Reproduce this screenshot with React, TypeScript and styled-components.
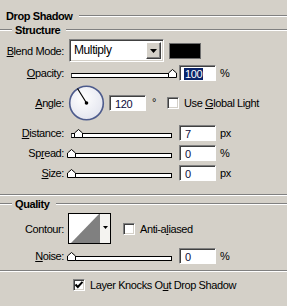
import styled, { createGlobalStyle } from "styled-components";

const GlobalStyle = createGlobalStyle`
  html, body {
    margin: 0;
    padding: 0;
    background: #d4d0c8;
  }
  body {
    font-family: "Liberation Sans", Arial, sans-serif;
    font-size: 11px;
    letter-spacing: -0.4px;
    color: #000;
  }
`;

type Unit = "%" | "px";

const sliders: { label: string; mn: number; pos: number; value: string; unit: Unit }[] = [
  { label: "Distance:", mn: 0, pos: 0.07, value: "7", unit: "px" },
  { label: "Spread:", mn: 2, pos: 0, value: "0", unit: "%" },
  { label: "Size:", mn: 0, pos: 0, value: "0", unit: "px" },
];

function Mnemonic({ text, at }: { text: string; at: number }) {
  return (
    <>
      {text.slice(0, at)}
      <U>{text[at]}</U>
      {text.slice(at + 1)}
    </>
  );
}

function Slider({ pos }: { pos: number }) {
  return (
    <SliderBox>
      <Track />
      <Thumb style={{ left: 4 + pos * 101 - 4.5 }} width="9" height="9" viewBox="0 0 9 9">
        <path d="M0.5 8.5 V4 L4.5 0.5 L8.5 4 V8.5 Z" fill="#fff" stroke="#000" />
      </Thumb>
    </SliderBox>
  );
}

function Check({ checked }: { checked?: boolean }) {
  return (
    <CheckBox>
      {checked && (
        <svg width="10" height="10" viewBox="0 0 10 10">
          <path d="M1.5 4.5 L3.8 7 L8.5 1.8" fill="none" stroke="#000" strokeWidth="2" />
        </svg>
      )}
    </CheckBox>
  );
}

export default function App() {
  return (
    <>
      <GlobalStyle />
      <Panel>
        <Heading $indent={6}>
          <span>Drop Shadow</span>
          <Etch />
        </Heading>
        <Heading $indent={0}>
          <Etch $lead />
          <span>Structure</span>
          <Etch />
        </Heading>

        <Row $mt={2} $h={23}>
          <Label><Mnemonic text="Blend Mode:" at={0} /></Label>
          <Select>
            <SelectText>Multiply</SelectText>
            <SelectButton>
              <svg width="7" height="4" viewBox="0 0 7 4">
                <path d="M0 0 H7 L3.5 4 Z" fill="#000" />
              </svg>
            </SelectButton>
          </Select>
          <Swatch />
        </Row>

        <Row $mt={3} $h={16}>
          <Label><Mnemonic text="Opacity:" at={0} /></Label>
          <Slider pos={1} />
          <Field><Selected>100</Selected></Field>
          <UnitText>%</UnitText>
        </Row>

        <Row $mt={4} $h={36}>
          <Label><Mnemonic text="Angle:" at={0} /></Label>
          <Dial width="37" height="36" viewBox="0 0 37 36">
            <defs>
              <radialGradient id="dialFill" cx="0.4" cy="0.35" r="0.7">
                <stop offset="0" stopColor="#ffffff" />
                <stop offset="1" stopColor="#e2e4ee" />
              </radialGradient>
            </defs>
            <circle cx="18.5" cy="18" r="16.8" fill="url(#dialFill)" stroke="#4d5b8c" strokeWidth="1.6" />
            <line x1="18.5" y1="18" x2="9.5" y2="3.5" stroke="#000" strokeWidth="1.2" />
            <circle cx="18.5" cy="18" r="1.8" fill="#000" />
          </Dial>
          <Field $ml={4}>120</Field>
          <Degree>°</Degree>
          <CheckItem $ml={11}>
            <Check />
            <span><Mnemonic text="Use Global Light" at={4} /></span>
          </CheckItem>
        </Row>

        {sliders.map((s) => (
          <Row key={s.label} $mt={4} $h={16}>
            <Label><Mnemonic text={s.label} at={s.mn} /></Label>
            <Slider pos={s.pos} />
            <Field>{s.value}</Field>
            <UnitText>{s.unit}</UnitText>
          </Row>
        ))}

        <Rule $mt={13} />

        <Heading $indent={0} $mt={1}>
          <Etch $lead />
          <span>Quality</span>
          <Etch />
        </Heading>

        <Row $mt={2} $h={31}>
          <Label>Contour:</Label>
          <Contour>
            <ContourPreview width="30" height="29" viewBox="0 0 30 29">
              <rect width="30" height="29" fill="#fff" />
              <path d="M2 29 L30 0 V29 Z" fill="#808080" />
            </ContourPreview>
            <ContourButton>
              <svg width="5" height="3" viewBox="0 0 5 3">
                <path d="M0 0 H5 L2.5 3 Z" fill="#000" />
              </svg>
            </ContourButton>
          </Contour>
          <CheckItem $ml={12}>
            <Check />
            <span><Mnemonic text="Anti-aliased" at={6} /></span>
          </CheckItem>
        </Row>

        <Row $mt={4} $h={16}>
          <Label><Mnemonic text="Noise:" at={0} /></Label>
          <Slider pos={0} />
          <Field>0</Field>
          <UnitText>%</UnitText>
        </Row>

        <Rule $mt={6} />

        <Row $mt={6} $h={13}>
          <CheckItem $ml={73}>
            <Check checked />
            <span><Mnemonic text="Layer Knocks Out Drop Shadow" at={14} /></span>
          </CheckItem>
        </Row>
      </Panel>
    </>
  );
}

const Panel = styled.div`
  width: 287px;
  height: 306px;
  padding-top: 9px;
  box-sizing: border-box;
  display: flex;
  flex-direction: column;
  overflow: hidden;
`;

const Heading = styled.div<{ $indent: number; $mt?: number }>`
  display: flex;
  align-items: center;
  height: 14px;
  margin-top: ${(p) => p.$mt ?? 0}px;
  padding-left: ${(p) => p.$indent}px;
  font-weight: bold;

  span {
    padding: 0 4px 0 0;
  }
`;

const Etch = styled.div<{ $lead?: boolean }>`
  height: 0;
  border-top: 1px solid #808080;
  border-bottom: 1px solid #fff;
  ${(p) => (p.$lead ? "width: 12px; margin-right: 3px;" : "flex: 1; margin-left: 2px;")}
`;

const Rule = styled.div<{ $mt: number }>`
  margin-top: ${(p) => p.$mt}px;
  height: 0;
  border-top: 1px solid #808080;
  border-bottom: 1px solid #fff;
`;

const Row = styled.div<{ $mt: number; $h: number }>`
  display: flex;
  align-items: center;
  margin-top: ${(p) => p.$mt}px;
  height: ${(p) => p.$h}px;
`;

const Label = styled.div`
  width: 64px;
  flex: none;
  text-align: right;
  white-space: nowrap;
`;

const U = styled.span`
  text-decoration: underline;
`;

const Select = styled.div`
  margin-left: 5px;
  width: 95px;
  height: 23px;
  box-sizing: border-box;
  display: flex;
  background: #fff;
  border: 1px solid;
  border-color: #808080 #fff #fff #808080;
  box-shadow: inset 1px 1px 0 #404040, inset -1px -1px 0 #d4d0c8;
  padding: 2px;
`;

const SelectText = styled.div`
  flex: 1;
  padding-left: 2px;
  line-height: 17px;
  font-size: 12px;
`;

const SelectButton = styled.div`
  width: 15px;
  box-sizing: border-box;
  background: #d4d0c8;
  border: 1px solid;
  border-color: #fff #404040 #404040 #fff;
  box-shadow: inset -1px -1px 0 #808080;
  display: flex;
  align-items: center;
  justify-content: center;
`;

const Swatch = styled.div`
  margin-left: 5px;
  width: 32px;
  height: 16px;
  box-sizing: border-box;
  background: #000;
  border: 1px solid #6e6e6e;
`;

const SliderBox = styled.div`
  position: relative;
  margin-left: 3px;
  width: 109px;
  height: 16px;
  flex: none;
`;

const Track = styled.div`
  position: absolute;
  left: 4px;
  right: 4px;
  top: 8px;
  height: 5px;
  box-sizing: border-box;
  background: #fff;
  border: 1px solid #000;
  border-left-color: #404040;
`;

const Thumb = styled.svg`
  position: absolute;
  top: 4px;
`;

const Field = styled.div<{ $ml?: number }>`
  margin-left: ${(p) => p.$ml ?? 3}px;
  width: 37px;
  height: 16px;
  box-sizing: border-box;
  flex: none;
  background: #fff;
  border: 1px solid;
  border-color: #808080 #fff #fff #808080;
  box-shadow: inset 1px 1px 0 #404040;
  padding: 2px 0 0 5px;
  line-height: 12px;
  font-size: 11px;
  color: #0c0c3a;
`;

const Selected = styled.span`
  background: #0a246a;
  color: #fff;
  margin-left: -1px;
  padding: 0 1px;
`;

const UnitText = styled.div`
  margin-left: 4px;
`;

const Dial = styled.svg`
  margin-left: 4px;
  flex: none;
`;

const Degree = styled.div`
  margin-left: 6px;
  align-self: flex-start;
  margin-top: 11px;
`;

const CheckItem = styled.label<{ $ml: number }>`
  margin-left: ${(p) => p.$ml}px;
  display: flex;
  align-items: center;
  gap: 5px;
  white-space: nowrap;
`;

const CheckBox = styled.div`
  width: 12px;
  height: 12px;
  box-sizing: border-box;
  flex: none;
  background: #fff;
  border: 1px solid;
  border-color: #808080 #fff #fff #808080;
  box-shadow: inset 1px 1px 0 #404040, inset -1px -1px 0 #d4d0c8;
  display: flex;
  align-items: center;
  justify-content: center;
`;

const Contour = styled.div`
  margin-left: 4px;
  width: 43px;
  height: 31px;
  box-sizing: border-box;
  border: 1px solid #000;
  display: flex;
  flex: none;
`;

const ContourPreview = styled.svg`
  display: block;
  flex: none;
`;

const ContourButton = styled.div`
  flex: 1;
  background: #f4f3f0;
  border-left: 1px solid #808080;
  display: flex;
  align-items: center;
  justify-content: center;
  padding-bottom: 2px;
`;
